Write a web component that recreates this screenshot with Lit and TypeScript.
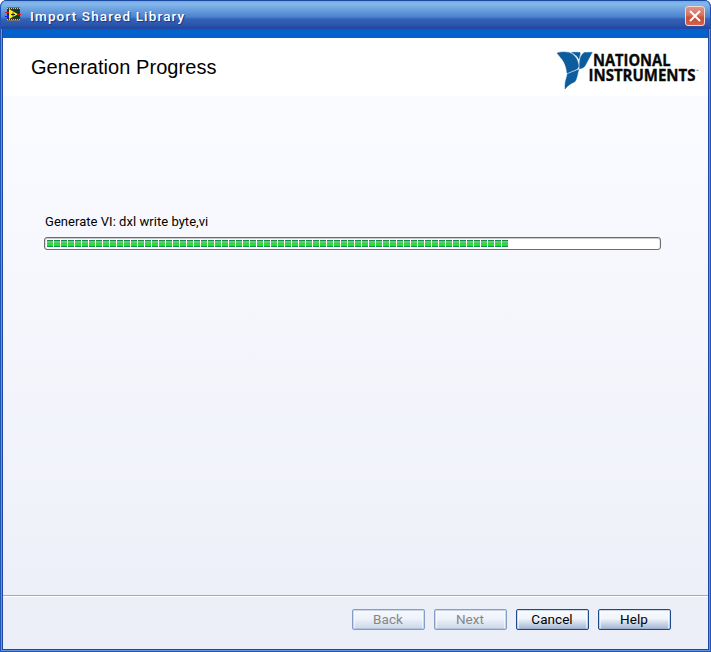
import { LitElement, html, svg, css } from "lit";
import { customElement, property } from "lit/decorators.js";

@customElement("segmented-progress")
class SegmentedProgress extends LitElement {
  @property({ type: Number }) filled = 0;

  static styles = css`
    :host { display: block; box-sizing: border-box; height: 13px; border: 1px solid #6c6c6c;
      border-radius: 3px; background: #fff; padding: 2px 0 0 2px;
      box-shadow: inset 0 1px #c9c9c9, inset 1px 0 #ddd, inset -1px 0 #e8e8e8; }
    .track { display: flex; gap: 1px; }
    .block { width: 6px; height: 7px; flex: none;
      background: linear-gradient(#148c4c 0 1px, #83ba87 1px 2px, #66c36b 2px 3px, #32d444 3px 4px, #14ea25 4px 6px, #148c4c 6px 7px); }
  `;

  render() {
    return html`<div class="track">${Array.from({ length: this.filled }, () => html`<div class="block"></div>`)}</div>`;
  }
}

@customElement("wizard-button")
class WizardButton extends LitElement {
  @property() label = "";
  @property({ type: Boolean, reflect: true }) disabled = false;

  static styles = css`
    :host { display: block; width: 73px; height: 21px; }
    button { display: block; box-sizing: border-box; width: 100%; height: 100%; padding: 0 1px 0 0;
      border: 1px solid #1d4a8a; border-radius: 2px; color: #000;
      font: 13.5px/19px Roboto, "Liberation Sans", sans-serif; letter-spacing: 0.05px;
      background: linear-gradient(#f7fbfd, #f1f5fa 45%, #c9d5e7 72%, #a4b6d3);
      box-shadow: inset 0 0 0 1px #87a5ca66, inset 2px 0 #ffffff99, inset -2px 0 #ffffff99; }
    :host([disabled]) button { border-color: #839fc8; color: #85878b;
      background: linear-gradient(#f5f8fd, #eff3fa 45%, #dce4f1 72%, #ccd7e8); }
  `;

  render() {
    return html`<button ?disabled=${this.disabled}>${this.label}</button>`;
  }
}

const appIcon = svg`
  <rect x="2" y="0" width="13" height="14" fill="#34342c"/>
  <path d="M2 .5h13M2 13.5h13" stroke="#77756a" stroke-width="1"/>
  <path d="M2 1.5h13M2 12.5h13" stroke="#c4c1ae" stroke-width="1" stroke-dasharray="1 1"/>
  <rect x="3" y="3" width="11" height="8" fill="#083d22"/>
  <path d="M4 2l9 5.2-9 4.8z" fill="#ffee16"/>
  <path d="M6 7.5h4M8 5.5v4" stroke="#222" stroke-width="1"/>
  <path d="M0 5.5h4M12 7.5h4" stroke="#f01616" stroke-width="1"/>
  <path d="M0 9.5h4" stroke="#1717ff" stroke-width="1"/>`;

const brandLogo = svg`
  <path fill="#0c5c9e" stroke="#0c5c9e" stroke-width=".4" d="M0 2C4 .6 8 .8 12 1.4C18 3.7 20.9 8 21.6 15C21.3 17 20.5 17.8 19 18.4L10 22.3C9.3 14.5 6.5 9.5 3.5 6.5C2 4.5 1 3.2 0 2z"/>
  <path fill="#0c5c9e" stroke="#0c5c9e" stroke-width=".4" d="M14.5 1.5C18 1 21 1.2 23 1.6C23.8 2.3 22.5 5.5 21.9 8.2C20.5 5.2 17.5 3 14.5 1.5z"/>
  <path fill="#0c5c9e" stroke="#0c5c9e" stroke-width=".4" d="M22.6 11.5C22.8 7 24.2 3.5 27.2 1.5L35.3 1.3L28 15C26.5 17 24.5 17.3 22.5 18z"/>
  <path fill="#0c5c9e" stroke="#0c5c9e" stroke-width=".4" d="M10.4 23L21.8 18.6C20.6 22 20.4 27 18.2 30.4C14.5 32.6 12 33.2 8 38C7.7 33 8.4 29.5 9.7 26z"/>
  <text class="brand" x="36" y="14.7" textLength="77.5" lengthAdjust="spacingAndGlyphs">NATIONAL</text>
  <text class="brand" x="31.5" y="29.5" textLength="107" lengthAdjust="spacingAndGlyphs">INSTRUMENTS</text>
  <text class="tm" x="138.5" y="21">™</text>`;

@customElement("app-root")
class AppRoot extends LitElement {
  static styles = css`
    :host { display: block; width: 711px; height: 652px; background: #fff;
      font-family: "Liberation Sans", Arial, sans-serif; }
    .window { box-sizing: border-box; width: 100%; height: 100%; display: flex; flex-direction: column;
      overflow: hidden; border-radius: 7px 7px 0 0; background: #2148a0; padding: 0 3px 3px;
      box-shadow: inset 0 0 0 1px #2055b5, inset 0 0 0 2px #6296e4; }
    .titlebar { flex: none; height: 29px; box-sizing: border-box; margin: 0 -3px; padding: 0 6px 0 6px;
      display: flex; align-items: center; border-radius: 7px 7px 0 0;
      background: linear-gradient(#1b489d 0 1px, #76a9e5 1px, #83b9ea 4px, #6a9edf 10px, #4c82cc 17px, #3561b6 19px, #2b55ae 25px, #2447a0 28px);
      box-shadow: inset 1px 0 #1f55b9, inset -1px 0 #1f4fae; }
    .icon { width: 16px; height: 14px; margin: 0 9px 1px -1px; }
    .caption { flex: 1; padding-top: 2px; color: #fff; font: 500 13.5px/18px Roboto, "Liberation Sans", sans-serif;
      letter-spacing: 1.15px; text-shadow: 1px 1px #173b86; white-space: nowrap; }
    .close { box-sizing: border-box; width: 20px; height: 20px; margin-top: 2px; padding: 0; border: 1px solid #f4d8d4;
      border-radius: 3px; background: linear-gradient(#dc9587, #d9705c 45%, #cb4c34 60%, #d4634a); }
    .close svg { display: block; margin: 2px; }
    .strip { flex: none; height: 9px; background: #0063cb; }
    .header { flex: none; height: 58px; box-sizing: border-box; display: flex; justify-content: space-between;
      padding: 13px 8px 0 28px; background: #fff; }
    h1 { margin: 5px 0 0; font: 20px/22px "Liberation Sans", Arial, sans-serif; letter-spacing: 0.05px; color: #000; }
    .logo { width: 143px; height: 40px; overflow: visible; }
    .brand { font: bold 16.5px "Open Sans", "Noto Sans", sans-serif; fill: #080808; stroke: #080808; stroke-width: .35px; }
    .tm { font: 3.5px "Liberation Sans", sans-serif; fill: #222; }
    .client { flex: 1; min-height: 0; display: flex; flex-direction: column;
      background: linear-gradient(#fafbff, #f5f6fc 45%, #eceef8); }
    .content { flex: 1; padding: 117px 47px 0 41px; }
    .status { margin: 0 0 7px 1px; padding-top: 1px; font: 13px/16px Roboto, "Liberation Sans", sans-serif; color: #000;
      letter-spacing: 0.04px; }
    segmented-progress { width: 617px; }
    .footer { flex: none; height: 54px; box-sizing: border-box; border-top: 1px solid #a9a8b0;
      box-shadow: inset 0 1px #fff; display: flex; justify-content: flex-end; gap: 9px; padding: 13px 37px 0; background: #eceef8; }
  `;

  render() {
    return html`
      <div class="window">
        <div class="titlebar">
          <svg class="icon" viewBox="0 0 16 14">${appIcon}</svg>
          <div class="caption">Import Shared Library</div>
          <button class="close" aria-label="Close">
            <svg width="14" height="14" viewBox="0 0 14 14"><path d="M2 2l10 10M12 2L2 12" stroke="#fff" stroke-width="2"/></svg>
          </button>
        </div>
        <div class="strip"></div>
        <div class="header">
          <h1>Generation Progress</h1>
          <svg class="logo" viewBox="0 0 143 40">${brandLogo}</svg>
        </div>
        <div class="client">
          <div class="content">
            <div class="status">Generate VI: dxl write byte,vi</div>
            <segmented-progress .filled=${66}></segmented-progress>
          </div>
          <div class="footer">
            <wizard-button label="Back" disabled></wizard-button>
            <wizard-button label="Next" disabled></wizard-button>
            <wizard-button label="Cancel"></wizard-button>
            <wizard-button label="Help"></wizard-button>
          </div>
        </div>
      </div>`;
  }
}
